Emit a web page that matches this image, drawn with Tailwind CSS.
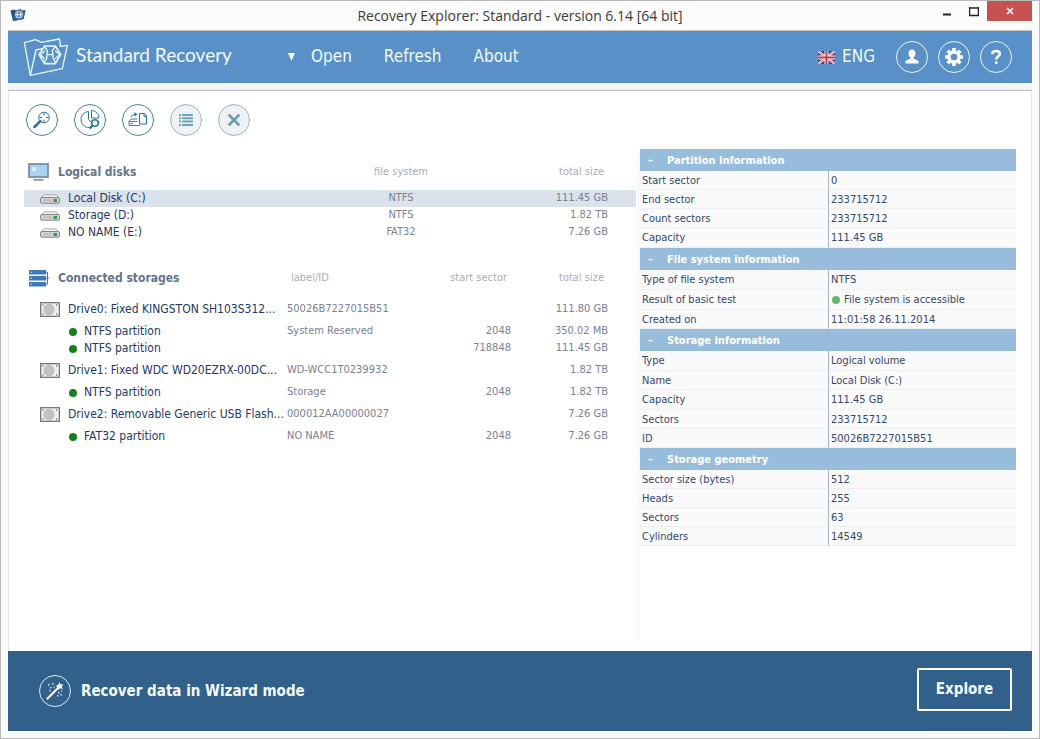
<!DOCTYPE html>
<html lang="en">
<head>
  <meta charset="UTF-8" />
  <meta name="viewport" content="width=device-width, initial-scale=1.0"/>
  <title>Recovery Explorer: Standard</title>
  <script src="https://cdn.jsdelivr.net/npm/@tailwindcss/browser@4"></script>
</head>
<body class="min-h-screen flex flex-col bg-[#fbfbfb] border border-[#b9b9b9] px-[7px] pb-[7px] font-['DejaVu_Sans_Condensed','DejaVu_Sans',sans-serif] text-[#33486b]">

  <!-- Shared icons -->
  <svg class="hidden">
    <symbol id="disk" viewBox="0 0 20 10">
      <path d="M4 .8h12l3 3.2H1z" fill="#f3f3f3" stroke="#9a9a9a" stroke-width=".8"/>
      <rect x=".6" y="3.6" width="18.8" height="5.6" rx="1.2" fill="#dcdcdc" stroke="#7d7d7d"/>
      <path d="M3 6.4h9" stroke="#bdb9bd" stroke-width="2"/>
      <rect x="13.5" y="5" width="3.6" height="3" fill="#2f9a4a"/>
    </symbol>
    <symbol id="drive" viewBox="0 0 20 15">
      <rect x=".7" y=".7" width="18.6" height="13.6" fill="#f1f1f1" stroke="#6b6b6b" stroke-width="1.2"/>
      <circle cx="9" cy="7.5" r="5.2" fill="#c2c2c2" stroke="#a9a9a9" stroke-width=".6"/>
      <g fill="#555"><rect x="2.4" y="2.4" width="1.2" height="1.2"/><rect x="2.4" y="11.4" width="1.2" height="1.2"/><rect x="16" y="2.4" width="1.2" height="1.2"/><rect x="16" y="11.4" width="1.2" height="1.2"/></g>
    </symbol>
  </svg>

  <!-- Title bar -->
  <div class="relative h-[29px] flex items-start justify-end">
    <svg class="absolute left-[2px] top-[7px]" width="16" height="14" viewBox="0 0 16 14">
      <path d="M.5 2.5 4 1.5l1.5 1L11 1l.5 1.500L15.500 2 13.500 11 3 13z" fill="#27507c"/>
      <path d="M3 13 4.500 5 15.500 2.500 13.500 11z" fill="#2f6194"/>
      <circle cx="9" cy="6.500" r="3.600" fill="#5f8fc0" stroke="#cfe0f0" stroke-width=".9"/>
      <path d="M7.500 4.500v4M10.500 4.500v4M6 6.500h6" stroke="#e6f0fa" stroke-width=".9"/>
    </svg>
    <h1 class="absolute inset-x-0 top-[4px] text-center text-[14px] leading-[22px] text-[#3a3a3a] font-['Open_Sans',sans-serif] pointer-events-none">Recovery Explorer: Standard - version 6.14 [64 bit]</h1>
    <button aria-label="Minimize" class="w-[27px] h-5 grid place-items-center"><svg width="10" height="20"><path d="M1 13.500h8" stroke="#222" stroke-width="2"/></svg></button>
    <button aria-label="Maximize" class="w-[27px] h-5 grid place-items-center"><svg width="10" height="20"><path d="M.5 6v8.500h9V6M0 7h10" fill="none" stroke="#222" stroke-width="1.500"/></svg></button>
    <button aria-label="Close" class="w-[45px] h-5 grid place-items-center bg-[#c75050]"><svg width="8" height="8"><path d="M1 1l6 6M7 1 1 7" stroke="#fff" stroke-width="1.700"/></svg></button>
  </div>

  <div class="flex-1 flex flex-col border-t border-[#c9c4bd]">

    <!-- Header -->
    <header class="h-[52px] flex items-center bg-[#5890c7] pl-[15px] pr-4 text-[17px] text-[#f2fbff]">
      <svg width="46" height="40" viewBox="66 112 138 120" fill="none" stroke="#eaf8ff" stroke-width="4" stroke-linejoin="round">
        <path d="M88 227 70 129l34-9 17 8 54-10 4 22 20-3-15 70z"/>
        <path d="M88 227l17-76 18-4M175 139l4-1"/>
        <path d="M131 139h32l16 26-16 27h-32l-17-27z" stroke-width="5"/>
        <path d="M131 141l8 12-2 24-8 13M163 141l-9 12 3 24 8 13M138 165h18M118 165l14-12M176 165l-14 12M118 165l13 12M176 165l-13-12" stroke-width="4"/>
      </svg>
      <span class="ml-[7px] w-[212px] text-[19px] leading-6 pb-1 font-['Lato',sans-serif]">Standard Recovery</span>
      <nav class="flex-1 flex items-center gap-8">
        <button class="flex items-center gap-4"><svg width="7" height="8"><path d="M0 0h7L3.500 8z" fill="#f2fbff"/></svg>Open</button>
        <button>Refresh</button>
        <button>About</button>
      </nav>
      <button class="flex items-center gap-[7px] mr-[21px]">
        <svg width="17" height="13" viewBox="0 0 17 13">
          <rect width="17" height="13" fill="#3b3f7c"/>
          <path d="M0 0l17 13M17 0 0 13" stroke="#eef" stroke-width="2.400"/>
          <path d="M0 0l17 13M17 0 0 13" stroke="#c8414f" stroke-width=".7"/>
          <path d="M8.500 0v13M0 6.500h17" stroke="#f4f4fb" stroke-width="4"/>
          <path d="M8.500 0v13M0 6.500h17" stroke="#c43a4a" stroke-width="2"/>
        </svg>ENG</button>
      <div class="flex gap-[10px] pr-1">
        <button aria-label="Account" class="size-8 rounded-full border border-[#e6f6ff] grid place-items-center">
          <svg width="14" height="16" viewBox="0 0 14 16" fill="#fff"><path d="M7 .5c2.200 0 3.500 1.600 3.500 3.700 0 1.800-.8 3-1.700 4v1.600l3.700 1.400c.8.3 1 .9 1 1.700v1.600H.5v-1.600c0-.8.2-1.400 1-1.700l3.700-1.400V8.200c-.9-1-1.700-2.200-1.700-4C3.500 2.100 4.800.5 7 .5z"/></svg>
        </button>
        <button aria-label="Settings" class="size-8 rounded-full border border-[#e6f6ff] grid place-items-center">
          <svg width="20" height="20" viewBox="-10 -10 20 20">
            <g stroke="#fff" stroke-width="3.600"><path d="M0-9V-5M0 9V5M-9 0h4M9 0H5M-6.300-6.300l3 3M6.300 6.300l-3-3M6.300-6.300l-3 3M-6.300 6.300l3-3"/></g>
            <circle r="5" fill="none" stroke="#fff" stroke-width="3.400"/>
          </svg>
        </button>
        <button aria-label="Help" class="size-8 rounded-full border border-[#e6f6ff] grid place-items-center">
          <svg width="12" height="16" viewBox="0 0 14 18" fill="none" stroke="#fff" stroke-width="3"><path d="M2.500 5.500C2.800 3 4.500 2 7 2s4.500 1.300 4.500 3.500C11.500 8.300 7.200 8 7.200 12"/><path d="M7.200 14v3" /></svg>
        </button>
      </div>
    </header>
    <div class="h-2 bg-[#f3f3f3] border-b border-[#b5bcc4]"></div>

    <main class="flex-1 bg-white border-x border-[#e3e6ea] px-[15px] pt-[13px] pb-[11px] flex flex-col">

      <!-- Toolbar -->
      <div class="flex gap-4 px-[2px] text-[#2b7391]">
        <button aria-label="Search" class="size-8 rounded-full border border-[#4c7f98] grid place-items-center">
          <svg width="18" height="18" viewBox="0 0 18 18" fill="none" stroke="currentColor"><circle cx="11" cy="6.500" r="5.300"/><path d="M11 2v2.500M11 8.500V11M6.500 6.500H9M13 6.500h2.500"/><path d="M7.300 10.200 1.500 16" stroke-width="2.600" stroke-linecap="round"/></svg>
        </button>
        <button aria-label="Find partitions" class="size-8 rounded-full border border-[#4c7f98] grid place-items-center">
          <svg width="20" height="20" viewBox="0 0 20 20" fill="none" stroke="currentColor"><path d="M8.500 1.500C4 2 1 5.500 1 9.500c0 4.500 3.500 8 8 8M8.500 1.500v8l3 3"/><path d="M11.500.5v7.500h7.500C19 4 15.500.5 11.500.5z"/><circle cx="15" cy="13" r="3.300" stroke-width="1.600"/><path d="M12.500 15.500l-3 3" stroke-width="2.200"/></svg>
        </button>
        <button aria-label="Save image" class="size-8 rounded-full border border-[#4c7f98] grid place-items-center">
          <svg width="20" height="16" viewBox="0 0 20 16" fill="none" stroke="currentColor"><path d="M11.500 1.500h5l2 2.500v8h-7z"/><path d="M16 1.500V4.500h2.500"/><path d="M3 5c1-2 2.500-2.500 5-2.500" /><path d="M6.500 0 9.500 2.500l-3 2z" fill="currentColor" stroke="none"/><path d="M9.500 7H3L1 9.500v4h11M1 9.500h8.500" stroke-width=".9"/><path d="M2.500 11.500h2" /></svg>
        </button>
        <button aria-label="List" disabled class="size-8 rounded-full border border-[#a3b4be] bg-[#eff2f4] grid place-items-center">
          <svg width="14" height="12" viewBox="0 0 14 12" stroke="#6fa3ba" stroke-width="2"><path d="M0 1h2M3 1h11M0 4.300h2M3 4.300h11M0 7.600h2M3 7.600h11M0 11h2M3 11h11"/></svg>
        </button>
        <button aria-label="Remove" disabled class="size-8 rounded-full border border-[#a3b4be] bg-[#eff2f4] grid place-items-center">
          <svg width="14" height="14" viewBox="0 0 13 13"><path d="M1.500 1.500l10 10M11.500 1.500l-10 10" stroke="#6a9cb2" stroke-width="2.600"/></svg>
        </button>
      </div>

      <div class="flex-1 mt-[13px] grid grid-cols-[614fr_378fr]">

        <!-- Disks and storages -->
        <div class="pt-[5px] pr-[2px] text-[11px] text-[#7b8092] whitespace-nowrap">
          <table class="w-full table-fixed">
            <colgroup><col><col class="w-[110px]"><col class="w-[180px]"></colgroup>
            <thead>
              <tr class="h-9 text-[#a9adba]">
                <th class="text-left text-[12px] text-[#64748c] pl-1">
                  <div class="flex items-center gap-[9px]">
                    <svg width="21" height="18" viewBox="0 0 21 18"><rect x="1" y="1" width="19" height="13" fill="#a8d3f5" stroke="#7c8fa3" stroke-width="1.800"/><path d="M4 4h4v4H4z" fill="#d6ecfc"/><path d="M5.500 16.800h10" stroke="#8593a1" stroke-width="1.800"/></svg>
                    Logical disks
                  </div>
                </th>
                <th class="font-normal text-center">file system</th>
                <th class="font-normal text-right pr-8">total size</th>
              </tr>
            </thead>
            <tbody>
              <tr class="h-[17px] bg-[#dae2eb]">
                <td class="pl-4 text-[12px] leading-[17px] text-[#1f3864]"><div class="flex items-center gap-2"><svg width="20" height="10"><use href="#disk"/></svg>Local Disk (C:)</div></td>
                <td class="text-center">NTFS</td>
                <td class="text-right pr-7">111.45 GB</td>
              </tr>
              <tr class="h-[17px]">
                <td class="pl-4 text-[12px] leading-[17px] text-[#1f3864]"><div class="flex items-center gap-2"><svg width="20" height="10"><use href="#disk"/></svg>Storage (D:)</div></td>
                <td class="text-center">NTFS</td>
                <td class="text-right pr-7">1.82 TB</td>
              </tr>
              <tr class="h-[17px]">
                <td class="pl-4 text-[12px] leading-[17px] text-[#1f3864]"><div class="flex items-center gap-2"><svg width="20" height="10"><use href="#disk"/></svg>NO NAME (E:)</div></td>
                <td class="text-center">FAT32</td>
                <td class="text-right pr-7">7.26 GB</td>
              </tr>
            </tbody>
          </table>

          <table class="w-full table-fixed mt-[19px]">
            <colgroup><col><col class="w-[114px]"><col class="w-[110px]"><col class="w-[125px]"></colgroup>
            <thead>
              <tr class="h-9 text-[#a9adba]">
                <th class="text-left text-[12px] text-[#64748c] pl-1">
                  <div class="flex items-center gap-[9px]">
                    <svg width="21" height="17" viewBox="0 0 21 17"><g fill="#3f78b8"><rect x="1" width="17" height="4.500"/><rect x="1" y="6" width="17" height="4.500"/><rect x="1" y="12" width="17" height="4.500"/></g><path d="M2.500 2.200h1.500M2.500 8.200h1.500M2.500 14.200h1.500" stroke="#dbe9f7"/><path d="M18 2.200h1.500v12H18M18 8.200h3" fill="none" stroke="#5b6e85"/></svg>
                    Connected storages
                  </div>
                </th>
                <th class="font-normal text-left pl-1">label/ID</th>
                <th class="font-normal text-right pr-1">start sector</th>
                <th class="font-normal text-right pr-8">total size</th>
              </tr>
            </thead>
            <tbody>
              <tr class="h-[27px]">
                <td class="pl-4 text-[12px] leading-[17px] text-[#1f3864]"><div class="flex items-center gap-2"><svg width="20" height="15"><use href="#drive"/></svg>Drive0: Fixed KINGSTON SH103S312...</div></td>
                <td>50026B7227015B51</td>
                <td></td>
                <td class="text-right pr-7">111.80 GB</td>
              </tr>
              <tr class="h-[17px]">
                <td class="pl-[45px] text-[12px] leading-[17px] text-[#1f3864]"><div class="flex items-center gap-[7px]"><span class="size-2 rounded-full bg-[#17801a]"></span>NTFS partition</div></td>
                <td>System Reserved</td>
                <td class="text-right">2048</td>
                <td class="text-right pr-7">350.02 MB</td>
              </tr>
              <tr class="h-[17px]">
                <td class="pl-[45px] text-[12px] leading-[17px] text-[#1f3864]"><div class="flex items-center gap-[7px]"><span class="size-2 rounded-full bg-[#17801a]"></span>NTFS partition</div></td>
                <td></td>
                <td class="text-right">718848</td>
                <td class="text-right pr-7">111.45 GB</td>
              </tr>
              <tr class="h-[27px]">
                <td class="pl-4 text-[12px] leading-[17px] text-[#1f3864]"><div class="flex items-center gap-2"><svg width="20" height="15"><use href="#drive"/></svg>Drive1: Fixed WDC WD20EZRX-00DC...</div></td>
                <td>WD-WCC1T0239932</td>
                <td></td>
                <td class="text-right pr-7">1.82 TB</td>
              </tr>
              <tr class="h-[17px]">
                <td class="pl-[45px] text-[12px] leading-[17px] text-[#1f3864]"><div class="flex items-center gap-[7px]"><span class="size-2 rounded-full bg-[#17801a]"></span>NTFS partition</div></td>
                <td>Storage</td>
                <td class="text-right">2048</td>
                <td class="text-right pr-7">1.82 TB</td>
              </tr>
              <tr class="h-[27px]">
                <td class="pl-4 text-[12px] leading-[17px] text-[#1f3864]"><div class="flex items-center gap-2"><svg width="20" height="15"><use href="#drive"/></svg>Drive2: Removable Generic USB Flash...</div></td>
                <td>000012AA00000027</td>
                <td></td>
                <td class="text-right pr-7">7.26 GB</td>
              </tr>
              <tr class="h-[17px]">
                <td class="pl-[45px] text-[12px] leading-[17px] text-[#1f3864]"><div class="flex items-center gap-[7px]"><span class="size-2 rounded-full bg-[#17801a]"></span>FAT32 partition</div></td>
                <td>NO NAME</td>
                <td class="text-right">2048</td>
                <td class="text-right pr-7">7.26 GB</td>
              </tr>
            </tbody>
          </table>
        </div>

        <!-- Properties -->
        <div class="border-l border-[#eef2f6] pl-px">
          <table class="w-full table-fixed text-[11px] leading-[17px] text-left border-separate border-spacing-0 [&_tbody_th]:font-normal [&_tbody_th]:bg-[#fafafa] [&_td]:bg-[#fafafa] [&_tbody_th]:pl-[2px] [&_td]:pl-[2px] [&_td]:border-l [&_td]:border-l-[#a7b3c0] [&_td]:border-b [&_td]:border-b-[#eeeff1] [&_tbody_th]:border-b [&_tbody_th]:border-b-[#eeeff1]">
            <thead>
              <tr class="h-[22px] bg-[#98bddc] text-white"><th colspan="2"><button class="flex items-center font-bold"><span class="w-[27px] pl-2 text-left">–</span>Partition information</button></th></tr>
            </thead>
            <tbody>
              <tr class="h-[19px]"><th>Start sector</th><td>0</td></tr>
              <tr class="h-[19px]"><th>End sector</th><td>233715712</td></tr>
              <tr class="h-[19px]"><th>Count sectors</th><td>233715712</td></tr>
              <tr class="h-5"><th>Capacity</th><td>111.45 GB</td></tr>
            </tbody>
          </table>
          <table class="w-full table-fixed text-[11px] leading-[17px] text-left border-separate border-spacing-0 [&_tbody_th]:font-normal [&_tbody_th]:bg-[#fafafa] [&_td]:bg-[#fafafa] [&_tbody_th]:pl-[2px] [&_td]:pl-[2px] [&_td]:border-l [&_td]:border-l-[#a7b3c0] [&_td]:border-b [&_td]:border-b-[#eeeff1] [&_tbody_th]:border-b [&_tbody_th]:border-b-[#eeeff1]">
            <thead>
              <tr class="h-[22px] bg-[#98bddc] text-white"><th colspan="2"><button class="flex items-center font-bold"><span class="w-[27px] pl-2 text-left">–</span>File system information</button></th></tr>
            </thead>
            <tbody>
              <tr class="h-5"><th>Type of file system</th><td>NTFS</td></tr>
              <tr class="h-5"><th>Result of basic test</th><td><div class="flex items-center gap-1 pl-px"><span class="size-2 rounded-full bg-[#67b56b]"></span>File system is accessible</div></td></tr>
              <tr class="h-[19px]"><th>Created on</th><td>11:01:58 26.11.2014</td></tr>
            </tbody>
          </table>
          <table class="w-full table-fixed text-[11px] leading-[17px] text-left border-separate border-spacing-0 [&_tbody_th]:font-normal [&_tbody_th]:bg-[#fafafa] [&_td]:bg-[#fafafa] [&_tbody_th]:pl-[2px] [&_td]:pl-[2px] [&_td]:border-l [&_td]:border-l-[#a7b3c0] [&_td]:border-b [&_td]:border-b-[#eeeff1] [&_tbody_th]:border-b [&_tbody_th]:border-b-[#eeeff1]">
            <thead>
              <tr class="h-[22px] bg-[#98bddc] text-white"><th colspan="2"><button class="flex items-center font-bold"><span class="w-[27px] pl-2 text-left">–</span>Storage information</button></th></tr>
            </thead>
            <tbody>
              <tr class="h-5"><th>Type</th><td>Logical volume</td></tr>
              <tr class="h-[19px]"><th>Name</th><td>Local Disk (C:)</td></tr>
              <tr class="h-5"><th>Capacity</th><td>111.45 GB</td></tr>
              <tr class="h-[19px]"><th>Sectors</th><td>233715712</td></tr>
              <tr class="h-[19px]"><th>ID</th><td>50026B7227015B51</td></tr>
            </tbody>
          </table>
          <table class="w-full table-fixed text-[11px] leading-[17px] text-left border-separate border-spacing-0 [&_tbody_th]:font-normal [&_tbody_th]:bg-[#fafafa] [&_td]:bg-[#fafafa] [&_tbody_th]:pl-[2px] [&_td]:pl-[2px] [&_td]:border-l [&_td]:border-l-[#a7b3c0] [&_td]:border-b [&_td]:border-b-[#eeeff1] [&_tbody_th]:border-b [&_tbody_th]:border-b-[#eeeff1]">
            <thead>
              <tr class="h-[22px] bg-[#98bddc] text-white"><th colspan="2"><button class="flex items-center font-bold"><span class="w-[27px] pl-2 text-left">–</span>Storage geometry</button></th></tr>
            </thead>
            <tbody>
              <tr class="h-[19px]"><th>Sector size (bytes)</th><td>512</td></tr>
              <tr class="h-[19px]"><th>Heads</th><td>255</td></tr>
              <tr class="h-[19px]"><th>Sectors</th><td>63</td></tr>
              <tr class="h-[19px]"><th>Cylinders</th><td>14549</td></tr>
            </tbody>
          </table>
        </div>
      </div>
    </main>

    <!-- Footer -->
    <footer class="h-20 flex items-center justify-between bg-[#31608b] pl-[31px] pr-5 text-[15px] font-bold text-[#f4fbff]">
      <button class="flex items-center gap-[10px]">
        <span class="size-8 rounded-full border border-[#d8ecf8] grid place-items-center">
          <svg width="18" height="18" viewBox="0 0 18 18"><path d="M1.500 16.500 12 6" stroke="#fff" stroke-width="2.200" stroke-linecap="round"/><path d="M13.500 0l1 2.500 3-.3-1.800 2.300L17 7l-2.700-.7L12 8l-.2-2.700L9.500 4l2.600-1z" fill="#fff"/><g fill="#cfe4f5"><rect x="2" y="2" width="1.500" height="1.500"/><rect x="6" y="1" width="1.500" height="1.500"/><rect x="4" y="5" width="1.500" height="1.500"/><rect x="3" y="8" width="1.500" height="1.500"/><rect x="7.500" y="4.500" width="1.200" height="1.200"/><rect x="12" y="10" width="1.500" height="1.500"/><rect x="14.500" y="12" width="1.500" height="1.500"/><rect x="11" y="13" width="1.500" height="1.500"/><rect x="15" y="8.500" width="1.200" height="1.200"/></g></svg>
        </span>
        Recover data in Wizard mode
      </button>
      <button class="w-[95px] h-[43px] mb-[3px] border-2 border-white rounded-xs">Explore</button>
    </footer>
  </div>
</body>
</html>
